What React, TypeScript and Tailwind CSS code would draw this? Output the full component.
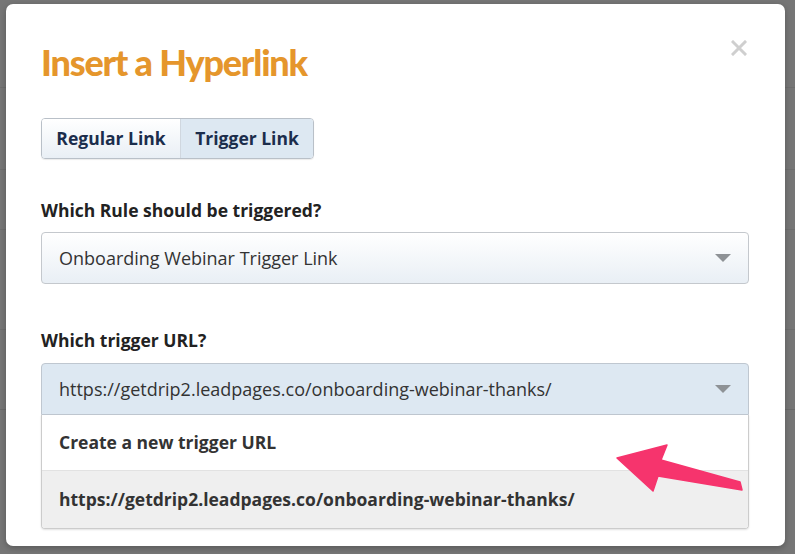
const FONT = { fontFamily: '"Open Sans", Lato, Arial, sans-serif' };

function Caret() {
  return (
    <svg width="16" height="8" viewBox="0 0 16 8" className="shrink-0">
      <polygon points="0,0 16,0 8,8" fill="#8e9296" />
    </svg>
  );
}

function Arrow() {
  return (
    <svg className="pointer-events-none absolute left-0 top-0" width="795" height="554" viewBox="0 0 795 554">
      <polygon
        points="617,458 667,445 661,460 740,482 742,490 658,476 653,491"
        fill="#f6346d"
        stroke="#f6346d"
        strokeWidth="1.5"
        strokeLinejoin="round"
      />
    </svg>
  );
}

export default function App() {
  return (
    <div className="relative h-[554px] w-[795px] overflow-hidden bg-[#767676]" style={FONT}>
      {/* faint page behind the overlay */}
      <div className="absolute inset-0 flex flex-col">
        <div className="h-[88px] border-b border-[#6e6e6e]" />
        <div className="h-[82px] border-b border-[#6e6e6e]" />
        <div className="h-[60px] border-b border-[#6e6e6e]" />
        <div className="h-[100px] border-b border-[#6e6e6e]" />
        <div className="h-[80px] border-b border-[#6a6a6a]" />
      </div>

      <div className="relative pl-[6px] pt-[4px]">
        <div className="flex h-[542px] w-[779px] flex-col rounded-[7px] bg-white px-[35px] shadow-[0_2px_6px_rgba(0,0,0,0.25)]">
          <div className="flex items-start justify-between pt-[35px]">
            <h1
              className="text-[36px] font-black leading-[46px] tracking-[-1.2px] text-[#e5962c]"
              style={{ fontFamily: 'Lato, "Open Sans", sans-serif' }}
            >
              Insert a Hyperlink
            </h1>
            <svg width="16" height="16" viewBox="0 0 16 16" className="mr-[3px] mt-[1px]">
              <path d="M2 2 L14 14 M14 2 L2 14" stroke="#cfcfcf" strokeWidth="3" strokeLinecap="square" />
            </svg>
          </div>

          <div className="mt-[33px] flex h-[41px] w-[273px] overflow-hidden rounded-[4px] border border-[#b9c0c8] shadow-[0_1px_1px_rgba(0,0,0,0.08)]">
            <div className="flex w-[139px] items-center justify-center border-r border-[#d0d7df] bg-gradient-to-b from-white to-[#e9eff5] text-[17.5px] font-bold text-[#1b2d4c]">
              Regular Link
            </div>
            <div className="flex flex-1 items-center justify-center bg-[#dde8f2] text-[17.5px] font-bold text-[#1b2d4c]">
              Trigger Link
            </div>
          </div>

          <div className="mt-[40px] text-[17.5px] font-bold leading-[22px] text-[#222]">
            Which Rule should be triggered?
          </div>
          <div className="mt-[11px] flex h-[52px] w-[708px] items-center justify-between rounded-[4px] border border-[#c4c8cd] bg-gradient-to-b from-white to-[#e9eff5] pl-[17px] pr-[17px]">
            <span className="text-[18px] text-[#333]">Onboarding Webinar Trigger Link</span>
            <Caret />
          </div>

          <div className="mt-[45px] text-[17.5px] font-bold leading-[22px] text-[#222]">Which trigger URL?</div>
          <div className="mt-[12px] w-[708px]">
            <div className="flex h-[52px] items-center justify-between rounded-t-[4px] border border-[#bfc7d0] bg-[#dde8f2] pl-[17px] pr-[17px]">
              <span className="text-[18px] text-[#333]">https://getdrip2.leadpages.co/onboarding-webinar-thanks/</span>
              <Caret />
            </div>
            <div className="overflow-hidden rounded-b-[4px] border border-t-0 border-[#cccccc] shadow-[0_1px_2px_rgba(0,0,0,0.12)]">
              <div className="flex h-[56px] items-center border-b border-[#e2e2e2] bg-white pl-[17px] text-[17.5px] font-bold text-[#333]">
                Create a new trigger URL
              </div>
              <div className="flex h-[57px] items-center bg-[#efefef] pl-[17px] text-[17.5px] font-bold text-[#333]">
                https://getdrip2.leadpages.co/onboarding-webinar-thanks/
              </div>
            </div>
          </div>
        </div>
      </div>

      <Arrow />
    </div>
  );
}
